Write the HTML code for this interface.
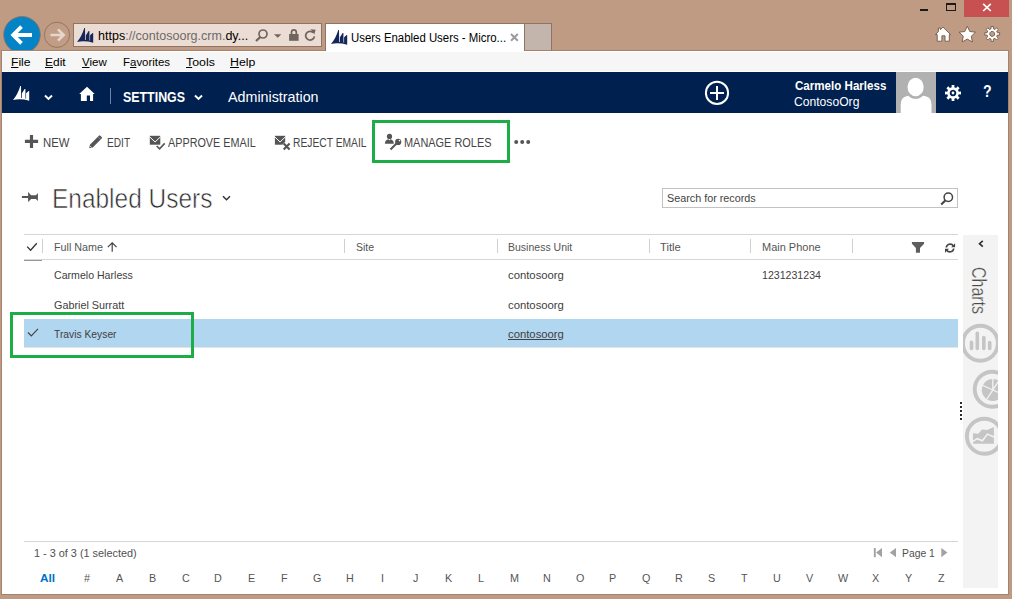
<!DOCTYPE html>
<html>
<head>
<meta charset="utf-8">
<title>Users Enabled Users - Microsoft Dynamics CRM</title>
<style>
*{box-sizing:border-box;margin:0;padding:0}
html,body{width:1012px;height:599px;overflow:hidden;background:#c09b83;font-family:"Liberation Sans","DejaVu Sans",sans-serif;}
.abs{position:absolute}
#win{position:absolute;left:0;top:0;width:1012px;height:599px;background:#c09b83;overflow:hidden}
.t{position:absolute;white-space:nowrap;line-height:1;transform-origin:0 0}
.sep{position:absolute;width:1px;height:14px;top:239px;background:#d0d0d0}
svg{display:block}
</style>
</head>
<body>
<div id="win">
  <!-- window buttons -->
  <div class="abs" style="left:920px;top:9px;width:8px;height:2px;background:#1a1a1a"></div>
  <div class="abs" style="left:946px;top:3px;width:10px;height:8px;border:1px solid #1a1a1a;border-top-width:2px"></div>
  <div class="abs" style="left:964px;top:0;width:45px;height:17px;background:#c75050"></div>
  <svg class="abs" style="left:982px;top:3px" width="10" height="9" viewBox="0 0 10 9"><path d="M1.200 0.800 L8.800 8 M8.800 0.800 L1.200 8" stroke="#fff" stroke-width="1.700" fill="none"/></svg>

  <!-- menubar + page background -->
  <div class="abs" style="left:1px;top:50px;width:1008px;height:545px;background:#a4826e"></div>
  <div class="abs" style="left:2px;top:51px;width:1006px;height:543px;background:#fff"></div>
  <div class="abs" style="left:2px;top:52px;width:1006px;height:19px;background:#f6f6f6"></div>

  <!-- back / forward -->
  <svg class="abs" style="left:0;top:12px;overflow:hidden" width="75" height="38" viewBox="0 12 75 38">
    <circle cx="22" cy="34.800" r="18.300" fill="#0483c6" stroke="#8f6f5e" stroke-width="0.800"/>
    <path d="M32 35 H14.500 M21.500 26.700 L13.200 35 L21.500 43.300" stroke="#fff" stroke-width="3.800" fill="none"/>
    <circle cx="57" cy="34.800" r="12.600" fill="#c29d86" stroke="#96755f" stroke-width="1"/>
    <path d="M50.500 35 H63 M58 29.300 L63.700 35 L58 40.700" stroke="#e6d6cc" stroke-width="2.600" fill="none"/>
  </svg>

  <!-- address bar -->
  <div class="abs" style="left:73px;top:23px;width:249px;height:24px;background:#ecddd4;border:1px solid #8f7465"></div>
  <svg class="abs" style="left:75.900px;top:26.800px" width="18" height="17" viewBox="0 0 18 17"><path d="M1 15 Q5.800 9.500 8.300 1.100 L9 1.100 L9.200 13 L9.900 13 L9.900 8.200 Q11.500 6.200 12.600 4.100 L13.400 4.100 L13.500 13.500 L14.100 13.700 L14.100 8.200 Q15.600 7.200 16.700 6.100 L17.200 6.100 L17.200 15.800 Q8.500 13.300 1 15Z" fill="#14265a"/></svg>
  <svg class="abs" style="left:254px;top:28px" width="64" height="16" viewBox="254 28 64 16">
    <circle cx="263" cy="34" r="4" fill="none" stroke="#6f6560" stroke-width="1.700"/><path d="M260.300 37 L256 41" stroke="#6f6560" stroke-width="2.300"/>
    <path d="M274 34.200 h7.400 l-3.700 3.600z" fill="#6f6560"/>
    <rect x="289.100" y="34" width="9.500" height="6.800" fill="#6f6560"/><path d="M291.500 34.500 V32.500 a2.400 2.600 0 0 1 4.800 0 V34.500" fill="none" stroke="#6f6560" stroke-width="1.700"/>
    <path d="M313.200 32.600 A4.400 4.400 0 1 0 314.400 36.400" fill="none" stroke="#6f6560" stroke-width="1.800"/><path d="M310.600 29.200 L315.600 29.800 L314.400 34.600Z" fill="#6f6560"/>
  </svg>

  <!-- tab -->
  <div class="abs" style="left:325px;top:23px;width:200px;height:28px;background:#fff;border:1px solid #8f7465;border-bottom:none"></div>
  <div class="abs" style="left:525px;top:23px;width:27px;height:27px;background:#c4b5ac;border:1px solid #8f7465;border-left:none;border-bottom:none"></div>
  <svg class="abs" style="left:330.400px;top:28.800px" width="18" height="17" viewBox="0 0 18 17"><path d="M1 15 Q5.800 9.500 8.300 1.100 L9 1.100 L9.200 13 L9.900 13 L9.900 8.200 Q11.500 6.200 12.600 4.100 L13.400 4.100 L13.500 13.500 L14.100 13.700 L14.100 8.200 Q15.600 7.200 16.700 6.100 L17.200 6.100 L17.200 15.800 Q8.500 13.300 1 15Z" fill="#14265a"/></svg>
  <svg class="abs" style="left:510px;top:33px" width="9" height="9" viewBox="0 0 9 9"><path d="M1 1 L7.800 7.800 M7.800 1 L1 7.800" stroke="#9c9c9c" stroke-width="2"/></svg>

  <!-- right toolbar icons -->
  <svg class="abs" style="left:932px;top:24px" width="72" height="20" viewBox="932 24 72 20">
    <path d="M935.400 34.600 L938.400 31.600 V28 H940.300 V29.700 L943 27.100 L950.600 34.600 H949.300 V41.200 H945 V35.800 H941.900 V41.200 H937.200 V34.600Z" fill="#fff" stroke="#6f5848" stroke-width="0.900" stroke-linejoin="round"/>
    <path d="M967.30 26.20 L969.77 31.50 L975.57 32.21 L971.29 36.20 L972.41 41.94 L967.30 39.10 L962.19 41.94 L963.31 36.20 L959.03 32.21 L964.83 31.50Z" fill="#fff" stroke="#6f5848" stroke-width="0.900" stroke-linejoin="round"/>
    <g transform="translate(992.200 33.900)"><path d="M-1.16 -5.17 L-1.23 -7.40 L1.23 -7.40 L1.16 -5.17 L2.84 -4.47 L4.36 -6.10 L6.10 -4.36 L4.47 -2.84 L5.17 -1.16 L7.40 -1.23 L7.40 1.23 L5.17 1.16 L4.47 2.84 L6.10 4.36 L4.36 6.10 L2.84 4.47 L1.16 5.17 L1.23 7.40 L-1.23 7.40 L-1.16 5.17 L-2.84 4.47 L-4.36 6.10 L-6.10 4.36 L-4.47 2.84 L-5.17 1.16 L-7.40 1.23 L-7.40 -1.23 L-5.17 -1.16 L-4.47 -2.84 L-6.10 -4.36 L-4.36 -6.10 L-2.84 -4.47Z M0 -2.50 a2.50 2.50 0 1 0 0.010 0z" fill="#fff" fill-rule="evenodd" stroke="#6f5848" stroke-width="0.900" stroke-linejoin="round"/></g>
  </svg>

  <!-- nav -->
  <div class="abs" style="left:2px;top:72px;width:1006px;height:41px;background:#002050"></div>
  <svg class="abs" style="left:12px;top:85px" width="18" height="17" viewBox="0 0 18 17"><path d="M1 15 Q5.800 9.500 8.300 1.100 L9 1.100 L9.200 13 L9.900 13 L9.900 8.200 Q11.500 6.200 12.600 4.100 L13.400 4.100 L13.500 13.500 L14.100 13.700 L14.100 8.200 Q15.600 7.200 16.700 6.100 L17.200 6.100 L17.200 15.800 Q8.500 13.300 1 15Z" fill="#fff"/></svg>
  <svg class="abs" style="left:44px;top:94px" width="9" height="7" viewBox="0 0 9 7"><path d="M1 1.500 L4.500 5 L8 1.500" stroke="#fff" stroke-width="1.900" fill="none"/></svg>
  <svg class="abs" style="left:79px;top:86px" width="16" height="15" viewBox="0 0 16 15"><path d="M8 0.800 L15.700 8 H14.100 V14.900 H11 V9.500 H7.800 V14.900 H1.900 V8 H0.200Z" fill="#fff"/></svg>
  <div class="abs" style="left:110px;top:88px;width:1px;height:16px;background:#7381a0"></div>
  <svg class="abs" style="left:193.500px;top:94px" width="9" height="7" viewBox="0 0 9 7"><path d="M1 1.500 L4.500 5 L8 1.500" stroke="#fff" stroke-width="1.900" fill="none"/></svg>
  <svg class="abs" style="left:703px;top:79px" width="28" height="28" viewBox="703 79 28 28"><circle cx="717" cy="92.900" r="11.100" fill="none" stroke="#fff" stroke-width="2"/><path d="M717 86 V100 M710 93 H724" stroke="#fff" stroke-width="2"/></svg>
  <svg class="abs" style="left:896px;top:72px" width="40" height="41" viewBox="896 72 40 41"><rect x="896" y="72" width="40" height="41" fill="#b1b1b1"/><ellipse cx="915.600" cy="87" rx="8.100" ry="9.200" fill="#fff"/><path d="M900.700 113 V104.500 Q900.700 97.800 906.500 96.300 L908.300 95.700 Q911 98.800 915.600 98.800 Q920.200 98.800 922.900 95.700 L925.700 96.300 Q931.500 97.800 931.500 104.500 V113Z" fill="#fff"/></svg>
  <svg class="abs" style="left:944px;top:84.200px" width="18" height="18" viewBox="-9 -9 18 18"><path d="M-1.33 -5.75 L-1.39 -7.98 L1.39 -7.98 L1.33 -5.75 L3.12 -5.01 L4.66 -6.63 L6.63 -4.66 L5.01 -3.12 L5.75 -1.33 L7.98 -1.39 L7.98 1.39 L5.75 1.33 L5.01 3.12 L6.63 4.66 L4.66 6.63 L3.12 5.01 L1.33 5.75 L1.39 7.98 L-1.39 7.98 L-1.33 5.75 L-3.12 5.01 L-4.66 6.63 L-6.63 4.66 L-5.01 3.12 L-5.75 1.33 L-7.98 1.39 L-7.98 -1.39 L-5.75 -1.33 L-5.01 -3.12 L-6.63 -4.66 L-4.66 -6.63 L-3.12 -5.01Z M0 -3.30 a3.30 3.30 0 1 0 0.010 0z" fill="#fff" fill-rule="evenodd"/><circle cx="0" cy="0" r="1.400" fill="#fff"/></svg>

  <!-- command bar icons -->
  <svg class="abs" style="left:20px;top:130px" width="520" height="24" viewBox="20 130 520 24">
    <path d="M31.500 134.900 V148 M24.900 141.400 H38.100" stroke="#555" stroke-width="3.200"/>
    <path d="M89.200 148.200 L89.900 144.700 L98.900 135.700 Q99.600 135 100.300 135.700 L101.700 137.100 Q102.400 137.800 101.700 138.500 L92.700 147.500Z" fill="#555"/>
    <path d="M89.800 145.800 L91.600 147.600" stroke="#fff" stroke-width="0.700"/><path d="M97.600 136.500 L100.900 139.800" stroke="#fff" stroke-width="0.500" opacity="0.600"/>
    <rect x="149.800" y="135.800" width="10.500" height="8.900" fill="#555"/>
    <path d="M149.500 136.700 L155.050 142 L160.600 136.700" stroke="#fff" stroke-width="1" fill="none"/>
    <path d="M156.900 146.200 L159.600 148.900 L164.500 143.600" stroke="#fff" stroke-width="4.200" fill="none"/>
    <path d="M156.700 146 L159.600 148.900 L164.700 143.400" stroke="#555" stroke-width="1.600" fill="none"/>
    <rect x="274.900" y="135.800" width="10.300" height="8.900" fill="#555"/>
    <path d="M274.600 136.700 L280.050 142 L285.500 136.700" stroke="#fff" stroke-width="1" fill="none"/>
    <path d="M283.600 143.500 L289.700 149.600 M289.700 143.500 L283.600 149.600" stroke="#fff" stroke-width="4.600" fill="none"/>
    <path d="M283.700 143.600 L289.600 149.500 M289.600 143.600 L283.700 149.500" stroke="#555" stroke-width="2.100" fill="none"/>
    <circle cx="389.500" cy="136.400" r="2.600" fill="#555"/>
    <path d="M384.900 143.700 Q384.900 139.200 389.400 139.200 Q393.800 139.200 393.800 143.700Z" fill="#555"/>
    <path d="M388.600 139 L389.400 140.600 L390.200 139Z" fill="#fff"/>
    <circle cx="398.200" cy="141.900" r="3.100" fill="#555"/><circle cx="399.500" cy="140.600" r="0.800" fill="#fff"/>
    <path d="M397 143 L390.500 149.500" stroke="#555" stroke-width="2"/>
    <circle cx="516.200" cy="142" r="2" fill="#555"/><circle cx="522.200" cy="142" r="2" fill="#555"/><circle cx="528.200" cy="142" r="2" fill="#555"/>
  </svg>
  <div class="abs" style="left:372px;top:120px;width:138px;height:43px;border:3px solid #1cad47"></div>

  <!-- title -->
  <svg class="abs" style="left:20px;top:190px" width="20" height="14" viewBox="20 190 20 14"><path d="M21.900 196.100 H28.100 V191.900 L31.100 195.200 H35.900 L37.900 192.900 V201.100 L35.900 199 H31.100 L28.100 202.100 V197.900 H21.900Z" fill="#555"/></svg>
  <svg class="abs" style="left:222px;top:194.500px" width="9" height="7" viewBox="0 0 9 7"><path d="M1 1.200 L4.500 4.700 L8 1.200" stroke="#333" stroke-width="1.500" fill="none"/></svg>

  <!-- search -->
  <div class="abs" style="left:662px;top:188px;width:296px;height:20px;border:1px solid #c2c2c2;background:#fff"></div>
  <svg class="abs" style="left:940px;top:192px" width="14" height="14" viewBox="0 0 14 14"><circle cx="8.300" cy="5.300" r="4.200" fill="none" stroke="#444" stroke-width="1.500"/><path d="M5.300 8.500 L1.200 12.400" stroke="#444" stroke-width="2.100"/></svg>

  <!-- grid header -->
  <div class="abs" style="left:24px;top:234px;width:934px;height:1px;background:#d6d6d6"></div>
  <div class="abs" style="left:24px;top:259px;width:934px;height:1px;background:#d6d6d6"></div>
  <div class="abs" style="left:24px;top:260px;width:18px;height:1px;background:#999"></div>
  <svg class="abs" style="left:25px;top:241px" width="14" height="12" viewBox="25 241 14 12"><path d="M27.200 246.600 L30.600 250.200 L36.800 243.300" stroke="#333" stroke-width="1.300" fill="none"/></svg>
  <div class="sep" style="left:42px"></div>
  <svg class="abs" style="left:107px;top:242px" width="11" height="10" viewBox="0 0 11 10"><path d="M5.200 9.800 V1.200 M0.800 5.200 L5.200 0.800 L9.600 5.200" stroke="#444" stroke-width="1.200" fill="none"/></svg>
  <div class="sep" style="left:344px"></div>
  <div class="sep" style="left:496.500px"></div>
  <div class="sep" style="left:648.500px"></div>
  <div class="sep" style="left:750px"></div>
  <div class="sep" style="left:852px"></div>
  <svg class="abs" style="left:910px;top:241px" width="16" height="13" viewBox="910 241 16 13"><path d="M911.900 242.100 H924.100 V243.700 L920 247.900 V252.800 H915.900 V247.900 L911.900 243.700Z" fill="#5e5e5e"/></svg>
  <svg class="abs" style="left:944px;top:242px" width="13" height="12" viewBox="944 242 13 12"><path d="M953.300 245.900 A3.800 3.800 0 0 0 946.300 247.500 M946.700 250.100 A3.800 3.800 0 0 0 953.700 248.500" stroke="#444" stroke-width="1.700" fill="none"/><path d="M955.100 243.300 V247.300 H951.100Z M945 252.700 V248.700 H949Z" fill="#444"/></svg>

  <!-- selected row -->
  <div class="abs" style="left:24px;top:319px;width:934px;height:28px;background:#b1d6f0"></div><div class="abs" style="left:24px;top:347px;width:934px;height:1px;background:#e4e4e4"></div>
  <svg class="abs" style="left:27px;top:327.600px" width="12" height="9" viewBox="0 0 12 9"><path d="M1 4.500 L4.300 7.800 L11 0.800" stroke="#444" stroke-width="1.200" fill="none"/></svg>
  <div class="abs" style="left:10px;top:312px;width:184px;height:46px;border:3px solid #1cad47"></div>

  <!-- charts pane -->
  <div class="abs" style="left:963px;top:235px;width:35px;height:353px;background:#f3f3f3"></div>
  <svg class="abs" style="left:977px;top:240px" width="8" height="8" viewBox="0 0 8 8"><path d="M5.800 0.800 L2.500 3.700 L5.800 6.600" stroke="#333" stroke-width="1.700" fill="none"/></svg>
  <svg class="abs" style="left:963.200px;top:320px;overflow:hidden" width="35" height="140" viewBox="963.200 320 35 140">
    <circle cx="980.600" cy="343.200" r="17.500" fill="none" stroke="#c5c5c5" stroke-width="3.900"/>
    <path d="M971.700 342.300 V348.500 M977.500 333.200 V348.500 M984 337.600 V348.500 M989.900 342.500 V348.500" stroke="#c5c5c5" stroke-width="3.600" stroke-linecap="round"/>
    <circle cx="992.400" cy="389.300" r="17.500" fill="none" stroke="#c5c5c5" stroke-width="3.900"/>
    <circle cx="993" cy="390" r="11" fill="#c5c5c5"/><path d="M993 390 V378 M981 384.500 L1005 395.500 M986.500 400 L999.500 380" stroke="#f3f3f3" stroke-width="1.300"/>
    <circle cx="984.600" cy="436.300" r="17.500" fill="none" stroke="#c5c5c5" stroke-width="3.900"/>
    <path d="M973.200 433.200 L978.500 433.700 L982.200 429.500 L987.200 430 L994.100 426.900 V443.700 H973.200Z" fill="#c5c5c5"/><path d="M972.500 441.600 L977.600 438.700 L982.600 440.800 L987.600 434.100 L994.800 437.300" stroke="#f3f3f3" stroke-width="1.500" fill="none"/>
  </svg>
  <svg class="abs" style="left:960px;top:402px" width="2" height="18" viewBox="0 0 2 18"><path d="M1 0 V18" stroke="#2a2a30" stroke-width="2" stroke-dasharray="2 2"/></svg>

  <!-- footer -->
  <div class="abs" style="left:24px;top:541px;width:934px;height:1px;background:#d6d6d6"></div>
  <svg class="abs" style="left:873px;top:548px" width="76" height="10" viewBox="873 548 76 10"><path d="M874.800 548 V557.200" stroke="#a2a2a2" stroke-width="1.900"/><path d="M882 548 V557.200 L876 552.600Z" fill="#a2a2a2"/><path d="M896 548 V557.200 L889.800 552.600Z" fill="#a2a2a2"/><path d="M941.300 548 V557.200 L947.400 552.600Z" fill="#a2a2a2"/></svg>

  <div class="t" style="left:98.13px;top:30.00px;font-size:12.6px;color:#000;transform:scaleX(0.9944);">https<span style="color:#6a6a6a">://contosoorg.crm.</span>dy...</div>
  <div class="t" style="left:350.60px;top:32.00px;font-size:12.3px;color:#000;transform:scaleX(0.9263);">Users Enabled Users - Micro...</div>
  <div class="t" style="left:11.19px;top:56.00px;font-size:11.7px;color:#000;transform:scaleX(1.0397);"><u>F</u>ile</div>
  <div class="t" style="left:44.94px;top:56.00px;font-size:11.7px;color:#000;transform:scaleX(1.0230);"><u>E</u>dit</div>
  <div class="t" style="left:81.54px;top:56.00px;font-size:11.7px;color:#000;transform:scaleX(0.9852);"><u>V</u>iew</div>
  <div class="t" style="left:122.95px;top:56.00px;font-size:11.7px;color:#000;transform:scaleX(0.9795);">F<u>a</u>vorites</div>
  <div class="t" style="left:186.22px;top:56.00px;font-size:11.7px;color:#000;transform:scaleX(1.0555);"><u>T</u>ools</div>
  <div class="t" style="left:230.35px;top:56.00px;font-size:11.7px;color:#000;transform:scaleX(1.0530);"><u>H</u>elp</div>
  <div class="t" style="left:123.00px;top:90.00px;font-size:14.0px;color:#fff;transform:scaleX(0.8856);font-weight:bold;">SETTINGS</div>
  <div class="t" style="left:227.82px;top:90.00px;font-size:14.6px;color:#fff;transform:scaleX(0.9790);">Administration</div>
  <div class="t" style="left:794.55px;top:80.00px;font-size:12.2px;color:#fff;transform:scaleX(0.9499);font-weight:bold;">Carmelo Harless</div>
  <div class="t" style="left:794.42px;top:96.00px;font-size:12.2px;color:#fff;transform:scaleX(0.9948);">ContosoOrg</div>
  <div class="t" style="left:983.18px;top:83.00px;font-size:16.2px;color:#fff;transform:scaleX(0.8712);font-weight:bold;">?</div>
  <div class="t" style="left:42.89px;top:137.00px;font-size:12.5px;color:#444;transform:scaleX(0.9066);">NEW</div>
  <div class="t" style="left:106.53px;top:137.00px;font-size:12.5px;color:#444;transform:scaleX(0.8103);">EDIT</div>
  <div class="t" style="left:168.06px;top:137.00px;font-size:12.5px;color:#444;transform:scaleX(0.8646);">APPROVE EMAIL</div>
  <div class="t" style="left:292.51px;top:137.00px;font-size:12.5px;color:#444;transform:scaleX(0.8231);">REJECT EMAIL</div>
  <div class="t" style="left:403.59px;top:137.00px;font-size:12.5px;color:#444;transform:scaleX(0.8744);">MANAGE ROLES</div>
  <div class="t" style="left:51.99px;top:186.00px;font-size:27.0px;color:#2c2c2c;transform:scaleX(0.9057);-webkit-text-stroke:0.6px #fff;">Enabled Users</div>
  <div class="t" style="left:667.06px;top:192.00px;font-size:11.7px;color:#444;transform:scaleX(0.9225);">Search for records</div>
  <div class="t" style="left:53.77px;top:241.00px;font-size:11.6px;color:#555;transform:scaleX(0.9278);">Full Name</div>
  <div class="t" style="left:356.20px;top:241.00px;font-size:11.6px;color:#555;transform:scaleX(0.9063);">Site</div>
  <div class="t" style="left:507.98px;top:241.00px;font-size:11.6px;color:#555;transform:scaleX(0.9065);">Business Unit</div>
  <div class="t" style="left:660.09px;top:241.00px;font-size:11.6px;color:#555;transform:scaleX(0.9668);">Title</div>
  <div class="t" style="left:762.13px;top:241.00px;font-size:11.6px;color:#555;transform:scaleX(0.9475);">Main Phone</div>
  <div class="t" style="left:53.82px;top:269.00px;font-size:11.6px;color:#404040;transform:scaleX(0.9135);">Carmelo Harless</div>
  <div class="t" style="left:507.72px;top:269.00px;font-size:11.6px;color:#404040;transform:scaleX(0.9744);">contosoorg</div>
  <div class="t" style="left:762.13px;top:269.00px;font-size:11.6px;color:#404040;transform:scaleX(0.9138);">1231231234</div>
  <div class="t" style="left:53.83px;top:299.00px;font-size:11.6px;color:#404040;transform:scaleX(0.9306);">Gabriel Surratt</div>
  <div class="t" style="left:507.72px;top:299.00px;font-size:11.6px;color:#404040;transform:scaleX(0.9744);">contosoorg</div>
  <div class="t" style="left:53.95px;top:328.00px;font-size:11.6px;color:#404040;transform:scaleX(0.8878);">Travis Keyser</div>
  <div class="t" style="left:507.72px;top:328.00px;font-size:11.6px;color:#404040;transform:scaleX(0.9744);text-decoration:underline;">contosoorg</div>
  <div class="t" style="left:33.85px;top:547.00px;font-size:11.6px;color:#505050;transform:scaleX(0.9377);">1 - 3 of 3 (1 selected)</div>
  <div class="t" style="left:901.70px;top:547.00px;font-size:11.6px;color:#505050;transform:scaleX(0.8938);">Page 1</div>
  <div class="t" style="left:40.22px;top:572.00px;font-size:11.6px;color:#0072c6;transform:scaleX(1.0185);font-weight:bold;">All</div>
  <div class="t" style="left:83.84px;top:572.00px;font-size:11.6px;color:#555;transform:scaleX(0.9300);">#</div>
  <div class="t" style="left:116.24px;top:572.00px;font-size:11.6px;color:#555;transform:scaleX(0.9300);">A</div>
  <div class="t" style="left:149.10px;top:572.00px;font-size:11.6px;color:#555;transform:scaleX(0.9300);">B</div>
  <div class="t" style="left:181.96px;top:572.00px;font-size:11.6px;color:#555;transform:scaleX(0.9300);">C</div>
  <div class="t" style="left:214.42px;top:572.00px;font-size:11.6px;color:#555;transform:scaleX(0.9300);">D</div>
  <div class="t" style="left:247.68px;top:572.00px;font-size:11.6px;color:#555;transform:scaleX(0.9300);">E</div>
  <div class="t" style="left:281.00px;top:572.00px;font-size:11.6px;color:#555;transform:scaleX(0.9300);">F</div>
  <div class="t" style="left:312.94px;top:572.00px;font-size:11.6px;color:#555;transform:scaleX(0.9300);">G</div>
  <div class="t" style="left:346.26px;top:572.00px;font-size:11.6px;color:#555;transform:scaleX(0.9300);">H</div>
  <div class="t" style="left:380.98px;top:572.00px;font-size:11.6px;color:#555;transform:scaleX(0.9300);">I</div>
  <div class="t" style="left:413.38px;top:572.00px;font-size:11.6px;color:#555;transform:scaleX(0.9300);">J</div>
  <div class="t" style="left:444.84px;top:572.00px;font-size:11.6px;color:#555;transform:scaleX(0.9300);">K</div>
  <div class="t" style="left:478.16px;top:572.00px;font-size:11.6px;color:#555;transform:scaleX(0.9300);">L</div>
  <div class="t" style="left:510.09px;top:572.00px;font-size:11.6px;color:#555;transform:scaleX(0.9300);">M</div>
  <div class="t" style="left:543.42px;top:572.00px;font-size:11.6px;color:#555;transform:scaleX(0.9300);">N</div>
  <div class="t" style="left:575.82px;top:572.00px;font-size:11.6px;color:#555;transform:scaleX(0.9300);">O</div>
  <div class="t" style="left:609.14px;top:572.00px;font-size:11.6px;color:#555;transform:scaleX(0.9300);">P</div>
  <div class="t" style="left:641.54px;top:572.00px;font-size:11.6px;color:#555;transform:scaleX(0.9300);">Q</div>
  <div class="t" style="left:674.86px;top:572.00px;font-size:11.6px;color:#555;transform:scaleX(0.9300);">R</div>
  <div class="t" style="left:707.72px;top:572.00px;font-size:11.6px;color:#555;transform:scaleX(0.9300);">S</div>
  <div class="t" style="left:741.05px;top:572.00px;font-size:11.6px;color:#555;transform:scaleX(0.9300);">T</div>
  <div class="t" style="left:773.44px;top:572.00px;font-size:11.6px;color:#555;transform:scaleX(0.9300);">U</div>
  <div class="t" style="left:806.30px;top:572.00px;font-size:11.6px;color:#555;transform:scaleX(0.9300);">V</div>
  <div class="t" style="left:837.76px;top:572.00px;font-size:11.6px;color:#555;transform:scaleX(0.9300);">W</div>
  <div class="t" style="left:872.02px;top:572.00px;font-size:11.6px;color:#555;transform:scaleX(0.9300);">X</div>
  <div class="t" style="left:904.88px;top:572.00px;font-size:11.6px;color:#555;transform:scaleX(0.9300);">Y</div>
  <div class="t" style="left:938.21px;top:572.00px;font-size:11.6px;color:#555;transform:scaleX(0.9300);">Z</div>
  <div class="t" style="left:989.23px;top:267.20px;font-size:20.0px;color:#4a4a4a;transform:rotate(90deg) scaleX(0.7996);-webkit-text-stroke:0.3px #f3f3f3;">Charts</div>
</div>
</body>
</html>
